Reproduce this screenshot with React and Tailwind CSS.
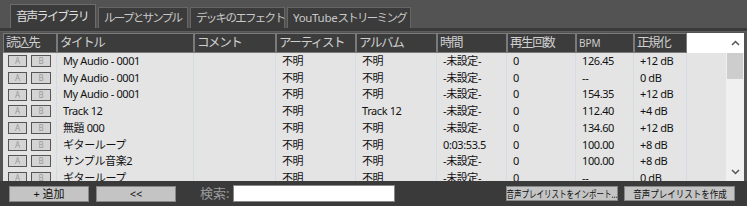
import React from "react";

const cols = [
  { key: "src", label: "読込先", w: "w-[54px]" },
  { key: "title", label: "タイトル", w: "w-[137px]" },
  { key: "comment", label: "コメント", w: "w-[82px]" },
  { key: "artist", label: "アーティスト", w: "w-[80px]" },
  { key: "album", label: "アルバム", w: "w-[81px]" },
  { key: "time", label: "時間", w: "w-[70px]" },
  { key: "plays", label: "再生回数", w: "w-[69px]" },
  { key: "bpm", label: "BPM", w: "w-[58px]" },
  { key: "norm", label: "正規化", w: "w-[53px]" },
];

const rows = [
  ["My Audio - 0001", "", "不明", "不明", "-未設定-", "0", "126.45", "+12 dB"],
  ["My Audio - 0001", "", "不明", "不明", "-未設定-", "0", "--", "0 dB"],
  ["My Audio - 0001", "", "不明", "不明", "-未設定-", "0", "154.35", "+12 dB"],
  ["Track 12", "", "不明", "Track 12", "-未設定-", "0", "112.40", "+4 dB"],
  ["無題 000", "", "不明", "不明", "-未設定-", "0", "134.60", "+12 dB"],
  ["ギターループ", "", "不明", "不明", "0:03:53.5", "0", "100.00", "+8 dB"],
  ["サンプル音楽2", "", "不明", "不明", "-未設定-", "0", "100.00", "+8 dB"],
  ["ギターループ", "", "不明", "不明", "-未設定-", "0", "--", "0 dB"],
];

const tabs = [
  { label: "音声ライブラリ", w: "w-[86px]" },
  { label: "ループとサンプル", w: "w-[90px]" },
  { label: "デッキのエフェクト", w: "w-[95px]" },
  { label: "ストリーミング", pre: "YouTube", w: "w-[124px]" },
];

const font = { fontFamily: '"Noto Sans", "Noto Sans CJK JP", sans-serif' };

function AB() {
  return (
    <div className="flex items-center gap-[4px] pl-[5px]">
      <span className="w-[19px] h-[12px] border border-[#555] bg-[#d4d4d4] text-[8px] leading-[10px] text-[#9a9a9a] text-center">A</span>
      <span className="w-[20px] h-[12px] border border-[#555] bg-[#d4d4d4] text-[8px] leading-[10px] text-[#9a9a9a] text-center">B</span>
    </div>
  );
}

export default function App() {
  return (
    <div className="w-[747px] h-[206px] bg-[#535353] flex flex-col overflow-hidden" style={font}>
      <div className="h-[28px] flex items-end pl-[10px] gap-[2px]">
        {tabs.map((t, i) => (
          <div
            key={t.label}
            className={
              i === 0
                ? `${t.w} h-[24px] pl-[5px] flex items-center bg-[#3b3b3b] border border-b-0 border-[#6c6c6c] text-[12px] text-[#e0e0e0] whitespace-nowrap`
                : `${t.w} h-[21px] pl-[5px] flex items-center bg-[#3b3b3b] border border-b-0 border-[#666] text-[11.5px] text-[#c8c8c8] whitespace-nowrap`
            }
          >
            {t.pre && <span className="tracking-[-0.3px]">{t.pre}</span>}
            <span className="tracking-[-1.7px]">{t.label}</span>
          </div>
        ))}
      </div>
      <div className="h-[4px] bg-[#3a3a3a] border-b border-[#5e5e5e]" />
      <div className="flex-1 flex mx-[3px] mt-[1px] bg-[#e4e4e4] overflow-hidden">
        <div className="flex flex-col w-[724px]">
          <div className="flex h-[20px] bg-white">
            {cols.map((c) => (
              <div
                key={c.key}
                className={`${c.w} shrink-0 h-[20px] bg-[#3c3c3c] border border-[#7a7a7a] px-[2px] flex items-center text-[#cfcfcf] whitespace-nowrap overflow-hidden ${c.key === "bpm" ? "text-[10px]" : "text-[12.5px] tracking-[-1.4px]"}`}
              >
                {c.label}
              </div>
            ))}
          </div>
          <div className="flex-1 relative">
            <div className="absolute inset-0 flex pointer-events-none">
              {cols.map((c) => (
                <div key={c.key} className={`${c.w} shrink-0 border-r border-[#d3dbe3]`} />
              ))}
            </div>
            <div className="relative flex flex-col">
              {rows.map((r, i) => (
                <div key={i} className="flex h-[16.7px] items-center text-[11px] tracking-[-0.4px] text-[#111]">
                  <div className="w-[54px] shrink-0 tracking-normal">
                    <AB />
                  </div>
                  {r.map((v, j) => (
                    <div key={j} className={`${cols[j + 1].w} shrink-0 pl-[6px] whitespace-nowrap`}>
                      {v}
                    </div>
                  ))}
                </div>
              ))}
            </div>
          </div>
        </div>
        <div className="w-[18px] flex flex-col bg-[#f0f0f0]">
          <div className="h-[20px] bg-white flex items-center justify-center">
            <svg width="9" height="6" viewBox="0 0 9 6"><path d="M1 5 L4.5 1.5 L8 5" fill="none" stroke="#555" strokeWidth="1.5" /></svg>
          </div>
          <div className="h-[26px] mx-[1px] bg-[#cdcdcd]" />
          <div className="flex-1" />
          <div className="h-[18px] flex items-center justify-center">
            <svg width="9" height="6" viewBox="0 0 9 6"><path d="M1 1 L4.5 4.5 L8 1" fill="none" stroke="#555" strokeWidth="1.5" /></svg>
          </div>
        </div>
      </div>
      <div className="h-[25px] bg-[#3a3a3a] flex items-center pl-[9px] pr-[12px] text-[11px]">
        <button className="w-[80px] h-[16px] bg-[#c4c4c4] border border-[#888] text-[#111] leading-none">+ 追加</button>
        <button className="ml-[7px] w-[80px] h-[16px] bg-[#c4c4c4] border border-[#888] text-[#111] leading-none">&lt;&lt;</button>
        <span className="ml-[24px] text-[13px] text-[#9a9a9a]">検索:</span>
        <div className="ml-[4px] w-[162px] h-[17px] bg-white border border-[#888]" />
        <div className="flex-1" />
        <button className="w-[112px] h-[15px] bg-[#c4c4c4] border border-[#888] text-[#111] text-[10px] leading-none whitespace-nowrap overflow-hidden flex items-center justify-center">
          <span className="inline-block scale-x-[0.75] whitespace-nowrap">音声プレイリストをインポート...</span>
        </button>
        <button className="ml-[6px] w-[111px] h-[15px] bg-[#c4c4c4] border border-[#888] text-[#111] text-[10px] leading-none whitespace-nowrap overflow-hidden flex items-center justify-center">
          <span className="inline-block scale-x-[0.85] whitespace-nowrap">音声プレイリストを作成</span>
        </button>
      </div>
    </div>
  );
}
